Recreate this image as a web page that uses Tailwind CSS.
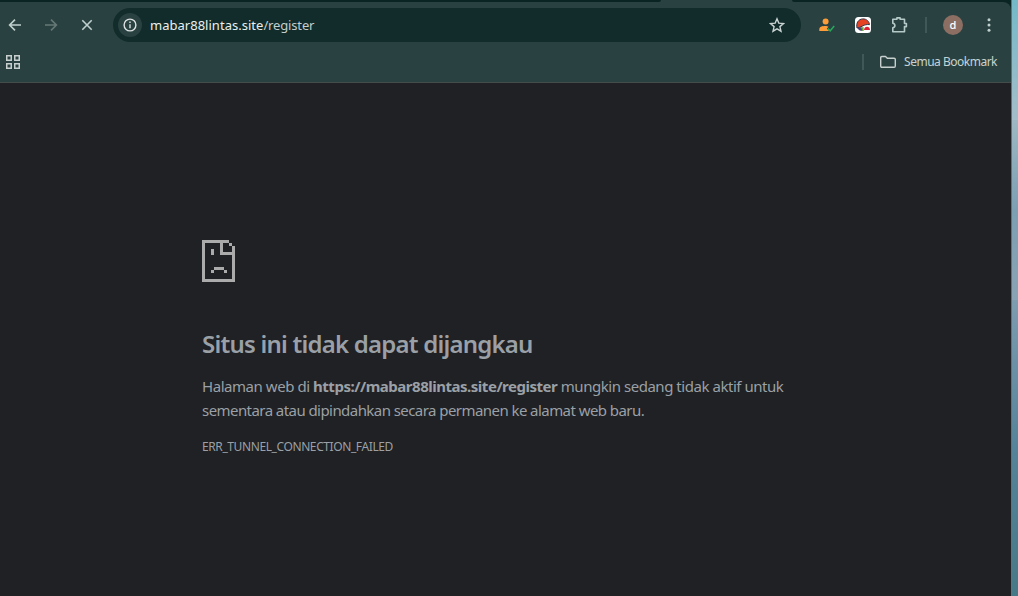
<!DOCTYPE html>
<html lang="id">
  <head>
    <meta charset="utf-8">
    <title>mabar88lintas.site</title>
    <script src="https://cdn.jsdelivr.net/npm/@tailwindcss/browser@4"></script>
  </head>
  <body class="flex h-[596px] w-[1018px] overflow-hidden bg-[#202124] font-['Noto_Sans','Open_Sans',sans-serif]">
    <div class="flex w-[1011px] flex-col">
      <!-- Tab strip -->
      <div class="flex h-[2px] justify-between bg-[#294241]">
        <div class="w-[661px] rounded-br-[3px] bg-[#092423]"></div>
        <div class="w-[219px] rounded-bl-[3px] bg-[#092423]"></div>
      </div>
      <div class="bg-[#092423]">
        <div class="h-[81px] rounded-tr-lg border-b border-[#454d4b] bg-[#294241]">
          <!-- Toolbar -->
          <div class="flex h-[46px] items-center">
            <div class="flex w-[113px] items-center gap-[20px] pl-[7px]">
              <svg class="size-4 shrink-0" viewBox="0 0 16 16" fill="none" stroke="#bfd0ce" stroke-width="1.6"><path d="M14 8H2.8M8 2.6 2.6 8 8 13.4"/></svg>
              <svg class="size-4 shrink-0" viewBox="0 0 16 16" fill="none" stroke="#657876" stroke-width="1.6"><path d="M2 8h11.2M8 2.6 13.4 8 8 13.4"/></svg>
              <svg class="size-4 shrink-0" viewBox="0 0 16 16" fill="none" stroke="#bfd0ce" stroke-width="1.6"><path d="m3.3 3.3 9.4 9.4m0-9.4-9.4 9.4"/></svg>
            </div>
            <div class="flex h-[34px] w-[688px] items-center rounded-full bg-[#122b2b] pr-4 pl-[5px]">
              <div class="flex size-6 items-center justify-center rounded-full bg-[#294241]">
                <svg class="size-[14px]" viewBox="0 0 14 14" fill="none" stroke="#dce2e1" stroke-width="1.4"><circle cx="7" cy="7" r="5.9"/><path d="M7 6.2v4M7 3.6v1.5"/></svg>
              </div>
              <div class="ml-[8px] pt-px text-[13px] whitespace-nowrap tracking-[-0.15px] text-[#c3cecc]"><span class="tracking-[0.02px] text-[#e8f0ef]">mabar88lintas.site</span>/register</div>
              <svg class="ml-auto size-4" viewBox="0 0 16 16" fill="none" stroke="#c9d3d2" stroke-width="1.4"><path d="m8 1.800 1.800 4.300 4.700.4-3.600 3.100 1.100 4.600L8 11.800l-4 2.400 1.100-4.600-3.600-3.100 4.700-.4z"/></svg>
            </div>
            <div class="flex items-center pl-[18px]">
              <svg class="h-4 w-4" viewBox="0 0 16 16"><circle cx="6.600" cy="4.400" r="3" fill="#fc9d3a"/><path d="M.3 14v-1.700C.3 9.700 3.200 9 6.300 9c1.500 0 2.500.2 3.200.7L7.800 11.500 10 14z" fill="#fc9d3a"/><path d="m9 11.500 2.200 2.300L15.200 9" fill="none" stroke="#26aa5a" stroke-width="1.500"/></svg>
              <svg class="ml-5 size-4" viewBox="0 0 16 16"><rect width="16" height="16" rx="3.500" fill="#fff"/><path d="M2 11C.9 6.200 3.200 2.200 7.700 1.900c3.900-.2 6.500 2.600 6.800 5.700-2.700-.3-4.600.2-6.700 1.300C5.700 10 4 10.800 2 11z" fill="#e54224" stroke="#363449"/><path d="M2.500 11.200 6.500 10l1 3.800C5 13.800 3.300 12.900 2.500 11.200z" fill="#4a3e78"/><path d="M6.500 10.500 8.500 10l.2 4-1.700-.3z" fill="#5da83a"/><path d="M9 13c.3-2 1.400-3.200 3-3.200s2.800 1.200 3 3.200z" fill="#dd2036"/></svg>
              <svg class="ml-[19px] h-[18px] w-[18px]" viewBox="0 0 18 18" fill="none" stroke="#b5cac8" stroke-width="1.600" stroke-linejoin="round"><path d="M2.800 3.300h4.100V1.900h3.200v1.400h4.400v4.200h1.900v3.100h-1.900v5.100H2.800v-3.900c2.800-.5 2.800-4 0-4.500z"/></svg>
              <div class="ml-[17px] h-4 w-[2px] bg-[#405958]"></div>
              <div class="ml-4 flex size-5 items-center justify-center rounded-full bg-[#8d6e63] text-[11px] font-medium text-white">d</div>
              <svg class="ml-[18px] h-4 w-4" viewBox="0 0 16 16" fill="#bfd0ce"><circle cx="8" cy="2.700" r="1.500"/><circle cx="8" cy="8" r="1.500"/><circle cx="8" cy="13.300" r="1.500"/></svg>
            </div>
          </div>
          <!-- Bookmarks bar -->
          <div class="flex h-[28px] items-center pr-[14px] pl-[6px]">
            <svg class="size-[14px]" viewBox="0 0 14 14" fill="none" stroke="#c8d0cf" stroke-width="1.500"><path d="M.75.75h4.500v4.500H.75zM8.750.75h4.500v4.500h-4.500zM.75 8.750h4.500v4.500H.75zM8.750 8.750h4.500v4.500h-4.500z"/></svg>
            <div class="ml-auto h-4 w-[2px] bg-[#405958]"></div>
            <svg class="ml-4 h-[14px] w-4" viewBox="0 0 16 14" fill="none" stroke="#c8d0cf" stroke-width="1.400" stroke-linejoin="round"><path d="M.7 2.700q0-1.200 1.200-1.200h3.600L7.300 3.300h6.800q1.200 0 1.200 1.200v6.600q0 1.200-1.200 1.200H1.900q-1.200 0-1.200-1.200z"/></svg>
            <span class="ml-[8px] text-[12px] whitespace-nowrap tracking-[-0.5px] text-[#c6d3d2]">Semua Bookmark</span>
          </div>
        </div>
      </div>
      <!-- Error page -->
      <main class="flex-1 pt-[157px] pl-[202px] text-[#9aa0a6]">
        <svg class="h-[42px] w-[33px]" viewBox="0 0 33 42" fill="#ababab" shape-rendering="crispEdges"><path d="M0 0h27v3H0zM0 3h3v39H0zM3 39h30v3H3zM30 6h3v33h-3zM27 3h3v3h-3zM18 3h3v12h-3zM21 12h9v3h-9zM9 9h3v6H9zM12 27h10v3H12zM9 30h3v3H9zM22 30h3v3h-3z"/></svg>
        <h1 class="mt-[47px] text-[24px] leading-[29px] font-semibold whitespace-nowrap tracking-[-0.78px]">Situs ini tidak dapat dijangkau</h1>
        <p class="mt-[16px] text-[15px] leading-6 whitespace-nowrap">
          <span class="tracking-[-0.45px]">Halaman web di </span><strong class="font-bold tracking-[-0.48px]">https://mabar88lintas.site/register</strong><span class="tracking-[-0.46px]"> mungkin sedang tidak aktif untuk</span><br>
          <span class="tracking-[-0.56px]">sementara atau dipindahkan secara permanen ke alamat web baru.</span>
        </p>
        <div class="mt-[13px] text-[12px] leading-6 tracking-[-0.4px]">ERR_TUNNEL_CONNECTION_FAILED</div>
      </main>
    </div>
    <!-- Window edge and desktop behind it -->
    <div class="w-px bg-[#6a7070]"></div>
    <div class="flex w-[6px] flex-col">
      <div class="h-[120px] bg-linear-to-b from-[#73b9c8] to-[#a3bdc9]"></div>
      <div class="h-[180px] bg-linear-to-b from-[#9db8c4] via-[#7c9fb2] to-[#8aa3b4]"></div>
      <div class="flex-1 bg-linear-to-b from-[#7d9cb0] via-[#558399] to-[#467987]"></div>
    </div>
  </body>
</html>
